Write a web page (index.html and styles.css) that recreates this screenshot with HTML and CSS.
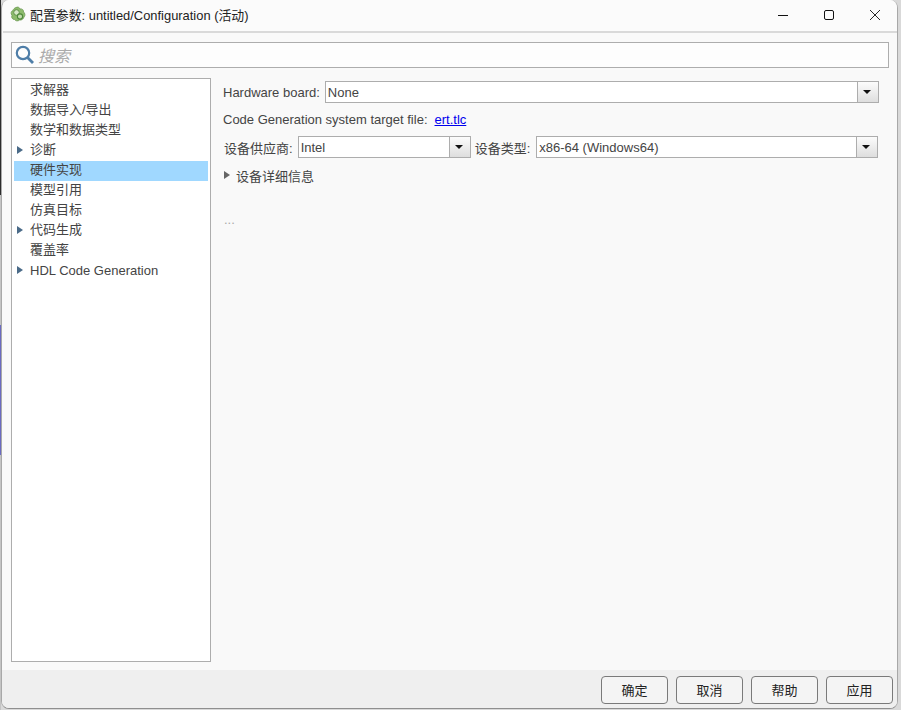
FILE: index.html
```html
<!DOCTYPE html>
<html lang="zh">
<head>
  <meta charset="UTF-8">
  <title>配置参数</title>
  <link rel="stylesheet" href="styles.css">
</head>
<body>
  <div class="window">
    <div class="titlebar">
      <svg class="app-icon" width="16" height="17" viewBox="0 0 16 17">
        <path d="M6 1.500c2-1 3.500 0 4 1.500 2-.5 4 1 3.500 3 1.500 1 2 3.500.5 5-.5 2-2.500 3.500-4.500 3-1.500 1.500-4 1-5-.5C2.500 13.500 1 11.500 2 9.500.5 7.500 1 5 3 4.500c.3-1.500 1.500-2.500 3-3z" fill="#8dbb6c" stroke="#6d9a55" stroke-width=".8"/>
        <circle cx="6.500" cy="6.500" r="2.800" fill="#d7e8c8" stroke="#5f8f48" stroke-width="1"/>
        <circle cx="10" cy="10.500" r="2.600" fill="#c4dcae" stroke="#4f8a3c" stroke-width="1.100"/>
      </svg>
      <span class="title">配置参数: untitled/Configuration (活动)</span>
      <div class="win-btns">
        <svg width="46" height="30" viewBox="0 0 46 30"><path d="M18 14.500h10" stroke="#111" stroke-width="1"/></svg>
        <svg width="46" height="30" viewBox="0 0 46 30"><rect x="18.500" y="9.500" width="9" height="9" rx="1.500" fill="none" stroke="#111" stroke-width="1"/></svg>
        <svg width="46" height="30" viewBox="0 0 46 30"><path d="M18 9l10 10M28 9l-10 10" stroke="#111" stroke-width=".9"/></svg>
      </div>
    </div>

    <div class="content">
      <div class="search">
        <svg width="20" height="20" viewBox="0 0 20 20">
          <circle cx="8" cy="8" r="6.200" fill="none" stroke="#4f7ea8" stroke-width="2.200"/>
          <path d="M12.500 12.500l5.500 5.500" stroke="#4f7ea8" stroke-width="2.800"/>
        </svg>
        <span class="search-text">搜索</span>
      </div>

      <div class="main">
        <ul class="tree">
          <li>求解器</li>
          <li>数据导入/导出</li>
          <li>数学和数据类型</li>
          <li class="has-kids">诊断</li>
          <li class="selected">硬件实现</li>
          <li>模型引用</li>
          <li>仿真目标</li>
          <li class="has-kids">代码生成</li>
          <li>覆盖率</li>
          <li class="has-kids hdl">HDL Code Generation</li>
        </ul>

        <div class="panel">
          <div class="row row-board">
            <label>Hardware board:</label>
            <div class="combo combo-grow"><span>None</span><i class="drop"></i></div>
          </div>
          <div class="row row-target">
            <label>Code Generation system target file:</label>
            <a href="#">ert.tlc</a>
          </div>
          <div class="row row-device">
            <label>设备供应商:</label>
            <div class="combo combo-vendor"><span>Intel</span><i class="drop"></i></div>
            <label>设备类型:</label>
            <div class="combo combo-grow combo-type"><span>x86-64 (Windows64)</span><i class="drop"></i></div>
          </div>
          <div class="row row-details">
            <i class="arrow"></i>
            <label>设备详细信息</label>
          </div>
          <div class="more">...</div>
        </div>
      </div>
    </div>

    <div class="footer">
      <button>确定</button>
      <button>取消</button>
      <button>帮助</button>
      <button>应用</button>
    </div>
  </div>
</body>
</html>
```

FILE: styles.css
```css
* {
  box-sizing: border-box;
}
html, body {
  margin: 0;
  height: 100%;
}
body {
  background-color: #d9d9d9;
  background-image: linear-gradient(#2b2b2b 195px, #c4c4c4 195px, #c4c4c4 325px, #6a6ac0 325px, #6a6ac0 455px, #c4c4c4 455px);
  background-size: 1px 100%;
  background-repeat: no-repeat;
  overflow: hidden;
  font-family: "Liberation Sans", "Noto Sans CJK SC", sans-serif;
  font-size: 13px;
  color: #444;
}
.window {
  width: 897px;
  height: 709px;
  margin-left: 1px;
  display: flex;
  flex-direction: column;
  background: #f9f9f9;
  border-radius: 8px;
  border-right: 1px solid #a8a8a8;
  border-bottom: 1px solid #8f8f8f;
  border-left: 1px solid #a8a8a8;
  overflow: hidden;
}
.titlebar {
  height: 33px;
  flex: none;
  display: flex;
  align-items: center;
  padding: 0 0 3px 7px;
  background: #fbfbfb;
  border-bottom: 2px solid #d9d9d9;
  margin-left: 1px;
}
.app-icon {
  margin-right: 4px;
}
.title {
  color: #222;
  font-size: 12.9px;
}
.win-btns {
  margin-left: auto;
  margin-right: -1px;
  display: flex;
  margin-top: 3px;
}
.content {
  flex: 1;
  display: flex;
  flex-direction: column;
  padding: 9px 8px 8px 9px;
  min-height: 0;
}
.search {
  height: 26px;
  flex: none;
  display: flex;
  align-items: center;
  gap: 3px;
  padding-left: 3px;
  background: #fdfdfd;
  border: 1px solid #adadad;
}
.search-text {
  font-size: 16px;
  font-style: italic;
  color: #aaa;
}
.main {
  flex: 1;
  display: flex;
  margin-top: 10px;
  min-height: 0;
}
.tree {
  width: 200px;
  flex: none;
  margin: 0;
  padding: 2px 2px;
  list-style: none;
  background: #fff;
  border: 1px solid #adadad;
}
.tree li {
  height: 20px;
  line-height: 18px;
  padding-left: 16px;
  position: relative;
}
.tree .hdl {
  line-height: 20px;
}
.tree .selected {
  background: #a0d8ff;
}
.tree .has-kids::before {
  content: "";
  position: absolute;
  left: 3px;
  top: 5px;
  border-left: 6px solid #4a6a88;
  border-top: 4.5px solid transparent;
  border-bottom: 4.5px solid transparent;
}
.panel {
  flex: 1;
  padding: 3px 10px 0 12px;
}
.row {
  display: flex;
  align-items: center;
}
.row-board {
  height: 22px;
  gap: 5px;
}
.row-target {
  height: 22px;
  margin-top: 5px;
  gap: 7px;
}
.row-device {
  height: 22px;
  margin-top: 6px;
  padding: 0 1px;
  gap: 4px;
}
.row-device .combo {
  margin-left: 1px;
}
.row-device .combo-type {
  margin-left: 2px;
}
.row-details {
  height: 20px;
  margin-top: 7px;
  padding-left: 1px;
  gap: 6px;
}
.arrow {
  border-left: 6px solid #666;
  border-top: 4px solid transparent;
  border-bottom: 4px solid transparent;
}
.combo {
  height: 22px;
  display: flex;
  align-items: center;
  justify-content: space-between;
  padding-left: 2px;
  background: #fff;
  border: 1px solid #adadad;
}
.combo-grow {
  flex: 1;
}
.combo-vendor {
  width: 173px;
}
.drop {
  width: 21px;
  height: 20px;
  position: relative;
  background: linear-gradient(#fcfcfc, #dedede);
  border-left: 1px solid #adadad;
}
.drop::after {
  content: "";
  position: absolute;
  left: 5px;
  top: 8px;
  border-top: 4px solid #111;
  border-left: 4px solid transparent;
  border-right: 4px solid transparent;
}
a {
  color: #0000ee;
}
.more {
  margin-top: 27px;
  padding-left: 1px;
  color: #aaa;
}
.footer {
  height: 38px;
  flex: none;
  display: flex;
  justify-content: flex-end;
  align-items: center;
  gap: 8px;
  padding: 1px 4px 0 0;
  background: #efefef;
}
button {
  width: 67px;
  height: 28px;
  font: inherit;
  color: #222;
  background: #f4f4f4;
  border: 1px solid #7a7a7a;
  border-radius: 4px;
}
```
